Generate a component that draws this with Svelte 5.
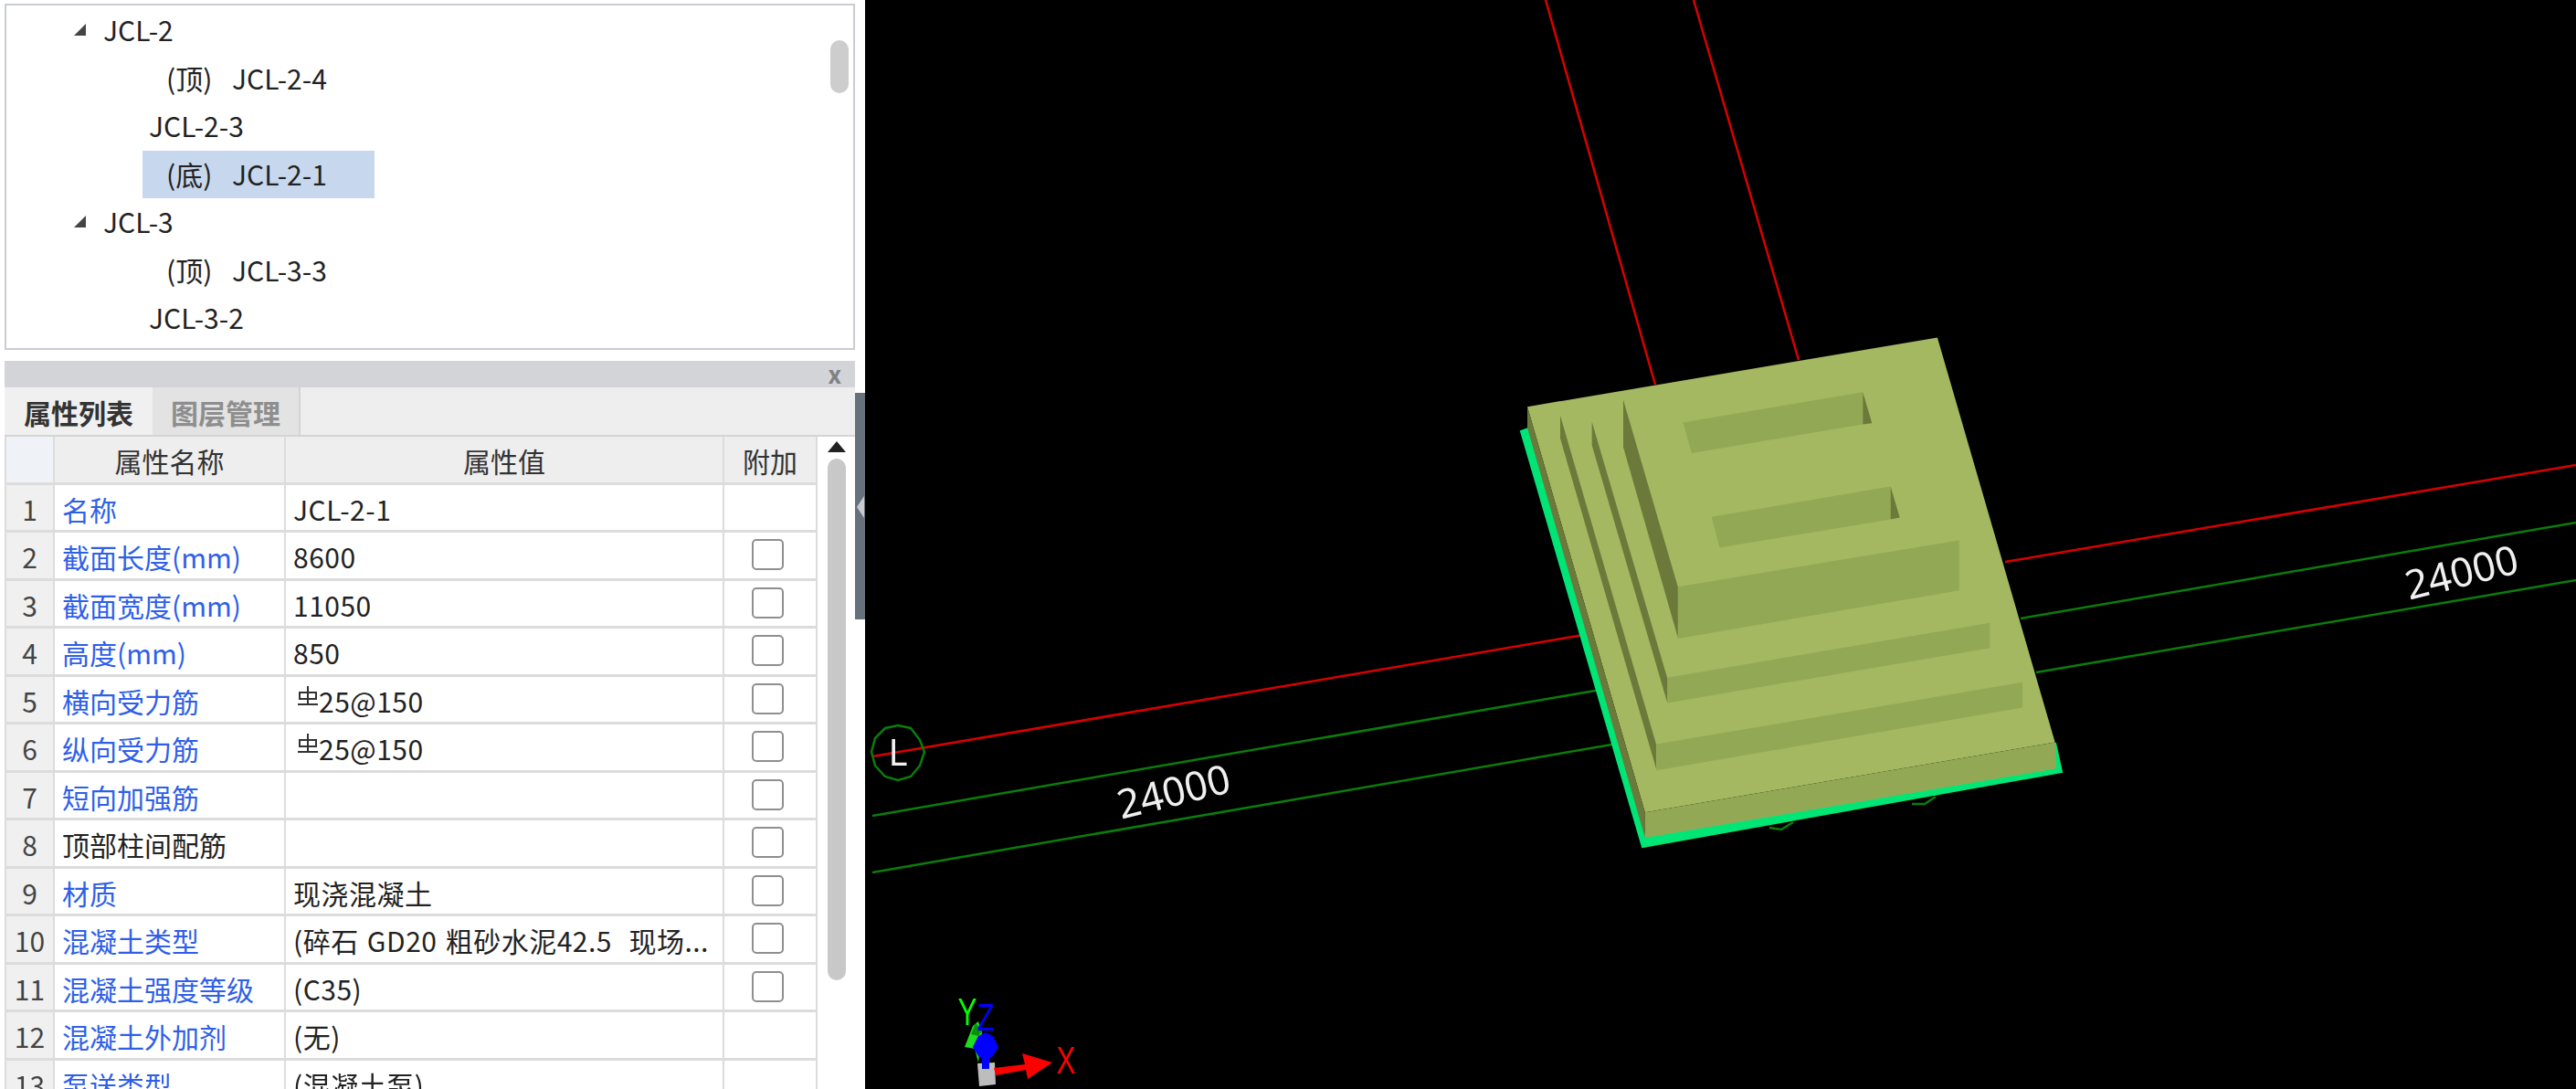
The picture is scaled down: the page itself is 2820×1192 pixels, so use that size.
<script>
  const treeRows = [
    { text: 'JCL-2', level: 'parent' },
    { tag: '(顶)', text: 'JCL-2-4', level: 'tagged' },
    { text: 'JCL-2-3', level: 'child' },
    { tag: '(底)', text: 'JCL-2-1', level: 'tagged', selected: true },
    { text: 'JCL-3', level: 'parent' },
    { tag: '(顶)', text: 'JCL-3-3', level: 'tagged' },
    { text: 'JCL-3-2', level: 'child' }
  ];

  const props = [
    { name: '名称', value: 'JCL-2-1' },
    { name: '截面长度(mm)', value: '8600', check: true },
    { name: '截面宽度(mm)', value: '11050', check: true },
    { name: '高度(mm)', value: '850', check: true },
    { name: '横向受力筋', value: '25@150', bar: true, check: true },
    { name: '纵向受力筋', value: '25@150', bar: true, check: true },
    { name: '短向加强筋', value: '', check: true },
    { name: '顶部柱间配筋', value: '', plain: true, check: true },
    { name: '材质', value: '现浇混凝土', check: true },
    { name: '混凝土类型', value: '(碎石 GD20 粗砂水泥42.5  现场...', check: true },
    { name: '混凝土强度等级', value: '(C35)', check: true },
    { name: '混凝土外加剂', value: '(无)' },
    { name: '泵送类型', value: '(混凝土泵)' }
  ];

  const faces = [
    { cls: 'front', pts: '513,320 967,233 967,325 535,408' },
    { cls: 'side', pts: '967,233 990,322 967,325' },
    { cls: 'front', pts: '585,590 1037,503 1037,597 605,678' },
    { cls: 'side', pts: '1037,503 1060,592 1037,597' },
    { cls: 'front', pts: '500,790 1210,657 1210,800 500,938' },
    { cls: 'side', pts: '362,255 500,790 500,935 362,390' },
    { cls: 'front', pts: '473,1050 1288,893 1288,965 473,1122' },
    { cls: 'side', pts: '283,318 473,1050 473,1120 283,385' },
    { cls: 'front', pts: '445,1240 1370,1063 1370,1135 445,1315' },
    { cls: 'side', pts: '203,300 445,1240 445,1310 203,365' },
    { cls: 'front', pts: '417,1435 1452,1235 1455,1310 417,1508' }
  ];

  // faces were read off the zoomed crop, map back to page coordinates
  function toPage(pts) {
    return pts.split(' ').map((p) => {
      const [x, y] = p.split(',').map(Number);
      return `${(1620 + x / 2.306 - 947).toFixed(1)},${(340 + y / 2.613).toFixed(1)}`;
    }).join(' ');
  }
</script>

<div class="page">
  <div class="left">
    <div class="tree-top"></div>
    <div class="tree">
      {#each treeRows as row}
        <div class="tree-row {row.level}">
          {#if row.level === 'parent'}
            <svg class="caret" width="16" height="16" viewBox="0 0 16 16"><path d="M14 1V14H1Z" fill="#444"></path></svg>
          {/if}
          <span class="label" class:selected={row.selected}>
            {#if row.tag}<span class="tag">{row.tag}</span>{/if}
            {row.text}
          </span>
        </div>
      {/each}
      <div class="tree-thumb"></div>
    </div>

    <div class="panel">
      <div class="panel-title"><span>x</span></div>
      <div class="tabs">
        <div class="tab active">属性列表</div>
        <div class="tab">图层管理</div>
      </div>
      <div class="table-wrap">
        <div class="table">
          <div class="row head">
            <div class="cell num"></div>
            <div class="cell center">属性名称</div>
            <div class="cell center">属性值</div>
            <div class="cell center">附加</div>
          </div>
          {#each props as p, i}
            <div class="row">
              <div class="cell num">{i + 1}</div>
              <div class="cell name" class:plain={p.plain}>{p.name}</div>
              <div class="cell value">
                {#if p.bar}
                  <svg class="rebar" width="24" height="24" viewBox="0 0 24 24" fill="none" stroke="#333" stroke-width="2"><path d="M12 1V22M3 8H21V15H3ZM1 21H23"></path></svg>
                {/if}
                <span class="value-text">{p.value}</span>
              </div>
              <div class="cell center">
                {#if p.check}<span class="check"></span>{/if}
              </div>
            </div>
          {/each}
        </div>
        <div class="scroll">
          <svg width="20" height="12" viewBox="0 0 20 12"><path d="M10 0L20 12H0Z" fill="#222"></path></svg>
          <div class="scroll-thumb"></div>
        </div>
      </div>
    </div>
    <div class="splitter"><span></span></div>
  </div>

  <svg class="view" viewBox="0 0 1873 1192" width="1873" height="1192">
    <g fill="none" stroke-width="2.5">
      <path class="red" d="M745 0L865 421M907 0L1022 394M8 828L792 694M1248 615L1873 509"></path>
      <path class="grn" d="M8 893L805 755M1265 677L1873 572M8 955L823 814M1282 736L1873 635"></path>
      <path class="grn" d="M36 794L50 797L60 810L65 823L60 838L50 850L36 854L22 850L11 838L7 823L11 808L22 797Z"></path>
      <path class="grn" d="M990 906L1003 908L1016 900M1146 880L1160 880L1172 872"></path>
    </g>
    <text class="dim" x="36" y="838" text-anchor="middle">L</text>
    <text class="dim size" transform="translate(338 867) rotate(-14)" text-anchor="middle" dy="15">24000</text>
    <text class="dim size" transform="translate(1748 627) rotate(-14)" text-anchor="middle" dy="15">24000</text>

    <polygon class="edge" points="718,472 726,469 854,917 1304,841 1303,813 1310,845 851,927"></polygon>
    <polygon class="top" points={toPage('120,275 1155,77 1452,1235 417,1435')}></polygon>
    <polygon class="side" points={toPage('120,275 417,1435 417,1508 120,335')}></polygon>
    {#each faces as f}
      <polygon class={f.cls} points={toPage(f.pts)}></polygon>
    {/each}

    <polygon class="cube" points="123,1164 142,1163 143,1187 125,1189"></polygon>
    <polygon points="141,1169 175,1165 172,1153 205,1163 178,1181 176,1171 143,1177" fill="#f00"></polygon>
    <polygon points="118,1123 124,1118 128,1130 124,1163 120,1148 109,1146" fill="#1fdc1f"></polygon>
    <polygon points="116,1132 121,1120 128,1128 124,1134" fill="#0a8f0a"></polygon>
    <path d="M132 1135V1170" stroke="#00f" stroke-width="8"></path>
    <polygon points="132,1130 140,1134 146,1146 140,1156 132,1162 124,1156 118,1146 124,1134" fill="#00f"></polygon>
    <text class="axis" x="112" y="1122" text-anchor="middle" fill="#0f0" textLength="21" lengthAdjust="spacingAndGlyphs">Y</text>
    <text class="axis" x="132" y="1128" text-anchor="middle" fill="#00f" textLength="19" lengthAdjust="spacingAndGlyphs">Z</text>
    <text class="axis" x="220" y="1175" text-anchor="middle" fill="#f00" textLength="21" lengthAdjust="spacingAndGlyphs">X</text>
  </svg>
</div>

<style>
  :global(body) {
    margin: 0;
    background: #000;
  }

  .page {
    display: flex;
    height: 1192px;
    width: 2820px;
    overflow: hidden;
    font-family: "Noto Sans CJK SC", "Noto Sans", sans-serif;
    font-size: 30px;
    color: #222;
  }

  .left {
    position: relative;
    width: 947px;
    flex-shrink: 0;
    background: #fff;
    padding-left: 5px;
    box-sizing: border-box;
    filter: blur(0.4px);
  }

  .tree-top {
    height: 4px;
    width: 931px;
    border-bottom: 2px solid #c9ccd1;
  }

  .tree {
    position: relative;
    width: 931px;
    height: 377px;
    box-sizing: border-box;
    padding-top: 1px;
    border: 2px solid #c9ccd1;
    border-top: none;
  }

  .tree-row {
    display: flex;
    align-items: center;
    height: 52.5px;
    white-space: nowrap;
  }

  .label {
    display: flex;
    height: 52.5px;
    line-height: 50px;
  }

  .tag {
    width: 72px;
  }

  .parent {
    padding-left: 73px;
  }

  .caret {
    margin-right: 17px;
  }

  .child {
    padding-left: 156px;
  }

  .tagged {
    padding-left: 149px;
  }

  .tagged .label {
    padding: 0 52px 0 26px;
  }

  .selected {
    background: #c7d8ee;
  }

  .tree-thumb {
    position: absolute;
    left: 902px;
    top: 38px;
    width: 20px;
    height: 58px;
    border-radius: 10px;
    background: #cdcdcd;
  }

  .panel {
    margin-top: 12px;
    width: 931px;
  }

  .panel-title {
    height: 29px;
    background: #d2d4d8;
    text-align: right;
    padding-right: 15px;
    font-size: 26px;
    font-weight: 700;
    line-height: 28px;
    color: #808080;
    box-sizing: border-box;
  }

  .tabs {
    display: flex;
    height: 54px;
    background: #eeeeee;
    border-bottom: 2px solid #d4d4d4;
    box-sizing: border-box;
  }

  .tab {
    width: 162px;
    text-align: center;
    line-height: 54px;
    font-weight: 700;
    color: #8e8e8e;
    background: #e3e3e3;
    border-right: 2px solid #d4d4d4;
    box-sizing: border-box;
  }

  .tab.active {
    color: #333;
    background: #f0f0f0;
    border-right: none;
  }

  .table-wrap {
    display: flex;
  }

  .table {
    width: 890px;
    border-left: 2px solid #dcdcdc;
    box-sizing: border-box;
  }

  .row {
    display: grid;
    grid-template-columns: 53px 253px 480px 102px;
    height: 52.5px;
    box-sizing: border-box;
  }

  .cell {
    display: flex;
    align-items: center;
    padding: 3px 0 0 8px;
    border-right: 2px solid #dcdcdc;
    border-bottom: 3px solid #dcdcdc;
    box-sizing: border-box;
    white-space: nowrap;
    overflow: hidden;
  }

  .head .cell {
    background: #eeeeee;
    color: #333;
  }

  .cell.center {
    justify-content: center;
    padding: 0;
  }

  .head .cell.center {
    padding-top: 3px;
  }

  .cell.num {
    justify-content: center;
    padding-left: 0;
    background: #f0f0f0;
    color: #444;
  }

  .head .cell.num {
    background: #eff3f8;
  }

  .name {
    color: #2f5fe8;
  }

  .name.plain {
    color: #222;
  }

  .value-text {
    white-space: pre;
    word-spacing: 2px;
    letter-spacing: 0.5px;
  }

  .rebar {
    margin: -10px 0 0 4px;
    flex-shrink: 0;
  }

  .check {
    width: 35px;
    height: 34px;
    margin: -1px 6px 0 0;
    border: 2px solid #8f8f8f;
    border-radius: 5px;
    box-sizing: border-box;
  }

  .scroll {
    flex: 1;
    display: flex;
    flex-direction: column;
    align-items: center;
    padding-top: 5px;
    margin-left: 1px;
  }

  .scroll-thumb {
    margin-top: 7px;
    width: 20px;
    height: 571px;
    border-radius: 10px;
    background: #c8c8c8;
  }

  .splitter {
    position: absolute;
    right: 0;
    top: 430px;
    width: 11px;
    height: 248px;
    background: #67717b;
  }

  .splitter span {
    position: absolute;
    top: 113px;
    left: 2px;
    width: 8px;
    height: 24px;
    background: #c8ccd0;
    clip-path: polygon(100% 0, 0 50%, 100% 100%);
  }

  .view {
    flex-shrink: 0;
    display: block;
    background: #000;
    filter: blur(0.5px);
  }

  .red {
    stroke: #d80000;
  }

  .grn {
    stroke: #0a7d0a;
  }

  .edge {
    fill: #00e676;
    stroke: #00e676;
    stroke-width: 2;
  }

  .top {
    fill: #a3b860;
  }

  .front {
    fill: #93a855;
  }

  .side {
    fill: #6b7a3a;
  }

  .cube {
    fill: #bdbdbd;
  }

  .dim {
    font-family: "Noto Sans", sans-serif;
    font-size: 40px;
    fill: #f0f0f0;
  }

  .dim.size {
    font-size: 44px;
  }

  .axis {
    font-family: "Liberation Sans", sans-serif;
    font-size: 42px;
  }
</style>
